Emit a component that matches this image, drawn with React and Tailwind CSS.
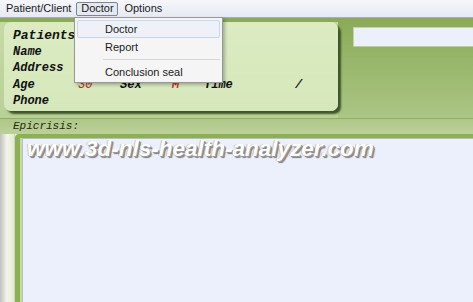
import React from 'react';

const labelFont = { fontFamily: '"Liberation Mono", "DejaVu Sans Mono", monospace' };

const InfoRow = ({ children }) => (
  <div className="flex items-center h-[16.5px] whitespace-pre">{children}</div>
);

const DropdownMenu = () => (
  <div className="absolute left-[74px] top-[17px] w-[149px] h-[66px] bg-[#f5f5f5] border border-[#979797] shadow-[2px_2px_3px_rgba(0,0,0,0.25)] px-[2px] py-[2px] text-[11px] text-[#1a1a1a]">
    <div className="h-[18px] flex items-center pl-[27px] rounded-[2px] border border-[#c9d6e8] bg-[#eef2f8]">Doctor</div>
    <div className="h-[18px] flex items-center pl-[28px]">Report</div>
    <div className="h-[7px] flex items-center pl-[26px]">
      <div className="h-px w-full bg-[#d7d7d7]" />
    </div>
    <div className="h-[18px] flex items-center pl-[28px]">Conclusion seal</div>
  </div>
);

export default function App() {
  return (
    <div
      className="relative w-[473px] h-[302px] overflow-hidden bg-[#eceffc]"
      style={{ fontFamily: '"Liberation Sans", Arial, sans-serif' }}
    >
      {/* menu bar */}
      <div className="h-[18px] flex items-center text-[11px] text-[#1a1a1a] bg-gradient-to-b from-[#f6f7fb] to-[#e6e9f3] border-b border-[#a9aeb8]">
        <span className="ml-[6px]">Patient/Client</span>
        <span className="ml-[5px] w-[42px] justify-center h-[14px] flex items-center border border-[#7c8591] rounded-[2px] bg-[#e4e8f0]">Doctor</span>
        <span className="ml-[6px]">Options</span>
      </div>

      {/* header area */}
      <div className="h-[100px] flex bg-gradient-to-b from-[#8aaa56] to-[#abc685] pt-[4px]">
        <div className="pl-[4px] bg-gradient-to-b from-[#c6daa6] to-[#b9d095]">
          <div
            className="w-[334px] h-[89px] rounded-[7px] bg-gradient-to-b from-[#dcebc2] to-[#d6e8bb] shadow-[3px_3px_2px_#3f5628] pl-[9px] pt-[5px] text-[12px] font-bold italic text-[#111]"
            style={labelFont}
          >
            <InfoRow>
              <span className="text-[13px]">Patients,</span>
            </InfoRow>
            <InfoRow>Name</InfoRow>
            <InfoRow>Address</InfoRow>
            <InfoRow>
              <span className="w-[65px]">Age</span>
              <span className="w-[42px] text-[#c0281b] font-normal">30</span>
              <span className="w-[52px]">Sex</span>
              <span className="w-[32px] text-[#c0281b]">M</span>
              <span className="w-[91px]">Time</span>
              <span>/</span>
            </InfoRow>
            <InfoRow>Phone</InfoRow>
          </div>
        </div>
        <div className="flex-1 pl-[15px] pt-[5px]">
          <div className="h-[19px] bg-[#eceffc] border-l border-t border-[#c4d2b0] shadow-[0_1px_0_#b9cf96]" />
        </div>
      </div>

      {/* epicrisis bar */}
      <div className="h-[16px] flex items-center bg-gradient-to-b from-[#aec789] to-[#bcd198] border-t border-[#8fb060]">
        <span className="ml-[13px] text-[11px] italic text-[#1f2a12]" style={labelFont}>
          Epicrisis:
        </span>
      </div>

      {/* text area */}
      <div className="flex h-[168px]">
        <div className="w-[15px] bg-gradient-to-r from-[#bfc3bd] via-[#f3f5ea] to-[#e4ead2] border-r border-[#c9d6b5]" />
        <div className="flex-1 flex flex-col">
          <div className="h-[4px] bg-[#8cb152] rounded-tl-[4px]" />
          <div className="flex-1 flex">
            <div className="w-[5px] bg-[#8cb152]" />
            <div className="w-[2px] bg-[#c6d9a6]" />
            <div className="flex-1 bg-[#eceffc] border-l border-t border-[#b7bfcc]" />
          </div>
        </div>
      </div>

      {/* watermark */}
      <div
        className="absolute left-[27px] top-[132px] text-[22.5px] font-bold italic text-white"
        style={{
          fontFamily: '"Liberation Sans", Arial, sans-serif',
          textShadow: '1px 1px 0 #9a9a9a, 2px 2px 1px #7d7d7d, -1px 0 0 #c8c8c8',
        }}
      >
        www.3d-nls-health-analyzer.com
      </div>

      <DropdownMenu />
    </div>
  );
}
